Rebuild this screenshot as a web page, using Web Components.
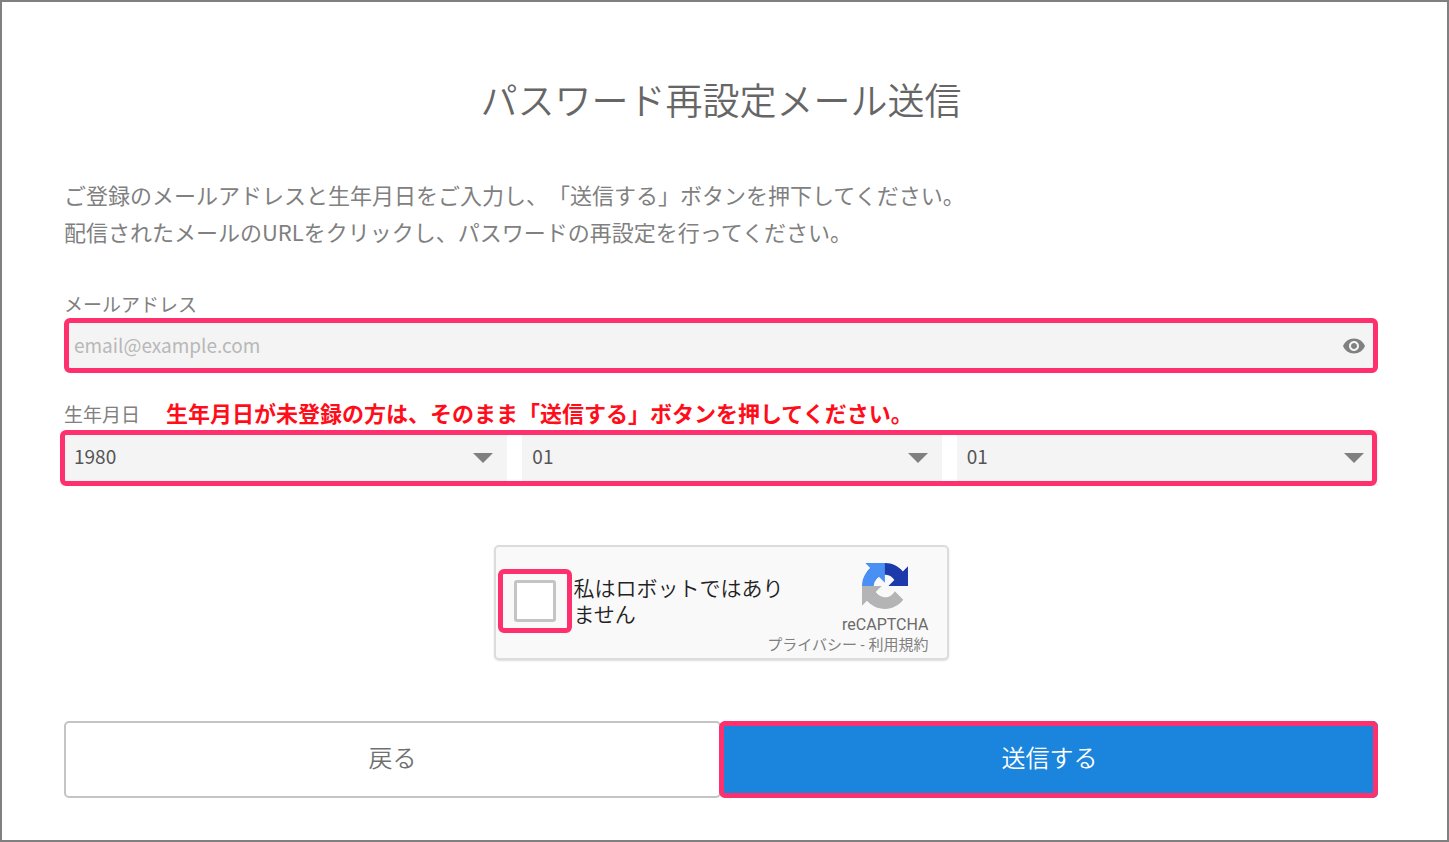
<!DOCTYPE html>
<html lang="ja">
<head>
<meta charset="utf-8">
<title>パスワード再設定メール送信</title>
<style>
  body {
    margin: 0;
    color: #808080;
    background: #fff;
    font-family: "Noto Sans CJK JP", sans-serif;
    font-size: 22px;
    text-spacing-trim: space-all;
  }
  p {
    margin: 0;
  }
</style>
</head>
<body>
<reset-page>
  <span slot="title">パスワード再設定メール送信</span>
  <p slot="lead">ご登録のメールアドレスと生年月日をご入力し、「送信する」ボタンを押下してください。<br>配信されたメールのURLをクリックし、パスワードの再設定を行ってください。</p>
  <email-field label="メールアドレス" placeholder="email@example.com"></email-field>
  <birth-date-field label="生年月日">生年月日が未登録の方は、そのまま「送信する」ボタンを押してください。</birth-date-field>
  <robot-check>私はロボットではありません</robot-check>
  <form-actions>
    <action-button slot="back">戻る</action-button>
    <action-button slot="send" primary>送信する</action-button>
  </form-actions>
</reset-page>

<script>
class ResetPage extends HTMLElement {
  constructor() {
    super();
    this.attachShadow({ mode: 'open' })
    this.shadowRoot.innerHTML = `
      <style>
        :host {
          display: block;
          box-sizing: border-box;
          min-height: 100vh;
          padding: 74px 69px 40px 62px;
          border: 2px solid #808080;
        }
        h1 {
          margin: 0 0 54px;
          color: #666;
          font-size: 37px;
          font-weight: 350;
          line-height: 46px;
          text-align: center;
        }
        .lead {
          margin-bottom: 40px;
          line-height: 37px;
        }
      </style>
      <main>
        <h1><slot name="title"></slot></h1>
        <div class="lead"><slot name="lead"></slot></div>
        <form><slot></slot></form>
      </main>
    `
  }
}

// pink frame laid over whatever is slotted in
class FocusFrame extends HTMLElement {
  constructor() {
    super();
    this.attachShadow({ mode: 'open' })
    this.shadowRoot.innerHTML = `
      <style>
        :host {
          display: block;
          position: relative;
        }
        :host::after {
          content: "";
          position: absolute;
          inset: var(--frame-inset, 0);
          border: 5px solid #ff306e;
          border-radius: 6px;
          pointer-events: none;
        }
      </style>
      <slot></slot>
    `
  }
}

class EmailField extends HTMLElement {
  constructor() {
    super();
    this.attachShadow({ mode: 'open' })
  }

  connectedCallback() {
    this.shadowRoot.innerHTML = `
      <style>
        :host {
          display: block;
          margin-bottom: 27px;
        }
        label {
          display: block;
          font-size: 19px;
          line-height: 28px;
        }
        .box {
          display: flex;
          align-items: center;
          height: 55px;
          padding: 0 12px 0 10px;
          border-radius: 6px;
          background: #f4f4f4;
        }
        input {
          flex: 1;
          min-width: 0;
          padding: 0 0 2px;
          border: 0;
          outline: 0;
          background: none;
          color: #444;
          font: inherit;
          font-size: 19px;
        }
        input::placeholder {
          color: #b8b8b8;
        }
        button {
          display: flex;
          padding: 0;
          border: 0;
          background: none;
        }
      </style>
      <label for="email"></label>
      <focus-frame>
        <div class="box">
          <input id="email" type="email">
          <button type="button" aria-label="表示">
            <svg width="24" height="24" viewBox="0 0 24 24" fill="#808080"><path d="M12 4.500C7 4.500 2.730 7.610 1 12c1.730 4.390 6 7.500 11 7.500s9.270-3.110 11-7.500c-1.730-4.390-6-7.500-11-7.500zM12 17c-2.760 0-5-2.240-5-5s2.240-5 5-5 5 2.240 5 5-2.240 5-5 5zm0-8c-1.660 0-3 1.340-3 3s1.340 3 3 3 3-1.340 3-3-1.340-3-3-3z"/></svg>
          </button>
        </div>
      </focus-frame>
    `
    this.shadowRoot.querySelector('label').textContent = this.getAttribute('label')
    this.shadowRoot.querySelector('input').placeholder = this.getAttribute('placeholder')
  }
}

class BirthDateField extends HTMLElement {
  constructor() {
    super();
    this.attachShadow({ mode: 'open' })
  }

  connectedCallback() {
    this.shadowRoot.innerHTML = `
      <style>
        :host {
          display: block;
          margin-bottom: 59px;
        }
        .head {
          display: flex;
          align-items: flex-start;
          gap: 26px;
          min-height: 30px;
        }
        label {
          font-size: 19px;
          line-height: 28px;
        }
        strong {
          color: #ff0d1a;
          font-weight: 700;
          line-height: 24px;
        }
        focus-frame {
          --frame-inset: 0 1px 0 -4px;
        }
        .row {
          display: grid;
          grid-template-columns: 443fr 419fr 421fr;
          gap: 15px;
        }
        .pick {
          display: grid;
          align-items: center;
          background: #f4f4f4;
        }
        select, svg {
          grid-area: 1 / 1;
        }
        select {
          appearance: none;
          width: 100%;
          height: 56px;
          padding: 0 44px 6px 10px;
          border: 0;
          border-radius: 0;
          outline: 0;
          background: none;
          color: #555;
          font: inherit;
          font-size: 19px;
        }
        svg {
          justify-self: end;
          margin-right: 14px;
          pointer-events: none;
        }
      </style>
      <div class="head"><label for="year"></label><strong><slot></slot></strong></div>
      <focus-frame>
        <div class="row">
          ${this._pick('year', '年', '1980')}
          ${this._pick('month', '月', '01')}
          ${this._pick('day', '日', '01')}
        </div>
      </focus-frame>
    `
    this.shadowRoot.querySelector('label').textContent = this.getAttribute('label')
  }

  _pick(id, name, value) {
    return `
      <div class="pick">
        <select id="${id}" aria-label="${name}"><option>${value}</option></select>
        <svg width="20" height="10" viewBox="0 0 20 10"><path d="M0 0h20L10 10z" fill="#808080"/></svg>
      </div>`
  }
}

class RobotCheck extends HTMLElement {
  constructor() {
    super();
    this.attachShadow({ mode: 'open' })
    this.shadowRoot.innerHTML = `
      <style>
        :host {
          display: flex;
          box-sizing: border-box;
          align-items: center;
          justify-content: space-between;
          width: 455px;
          max-width: 100%;
          height: 115px;
          margin: 0 auto 61px;
          padding: 0 18px 0 2px;
          border: 2px solid #dcdcdc;
          border-radius: 5px;
          background: #f9f9f9;
          box-shadow: 0 1px 2px #0002;
          font-family: Roboto, "Noto Sans CJK JP", sans-serif;
        }
        .check {
          display: flex;
          align-items: center;
          gap: 2px;
          padding-bottom: 4px;
        }
        .tick {
          display: grid;
          place-items: center;
          width: 74px;
          height: 64px;
        }
        input {
          appearance: none;
          width: 42px;
          height: 42px;
          margin: 0;
          border: 3px solid #c4c4c4;
          border-radius: 3px;
          background: #fff;
        }
        label {
          width: 10em;
          padding-top: 2px;
          color: #222;
          font-size: 21px;
          font-weight: 350;
          line-height: 26px;
        }
        .brand {
          display: flex;
          flex-direction: column;
          align-items: flex-end;
          width: 0;
          padding-top: 12px;
          font-size: 15px;
          line-height: 20px;
          white-space: nowrap;
        }
        .logo {
          display: grid;
          justify-items: center;
          gap: 6px;
          color: #6a6a6a;
          font-size: 16px;
        }
        a {
          color: inherit;
          text-decoration: none;
        }
      </style>
      <div class="check">
        <focus-frame><div class="tick"><input type="checkbox" id="robot"></div></focus-frame>
        <label for="robot"><slot></slot></label>
      </div>
      <div class="brand">
        <div class="logo">
          <svg width="46" height="46" viewBox="0 0 64 64">
            <path fill="#1c3aa9" d="M64 31.955l-.033-1.370V4.687l-7.160 7.160C50.948 4.674 42.033.093 32.050.093c-10.400 0-19.622 4.960-25.458 12.640l11.736 11.860a15.550 15.550 0 0 1 4.754-5.334c2.050-1.600 4.952-2.906 8.968-2.906.485 0 .86.057 1.135.163 4.976.393 9.288 3.140 11.828 7.124l-8.307 8.307z"/>
            <path fill="#4a90f4" d="M31.862.094l-1.370.033H4.594l7.160 7.160C4.580 13.147 0 22.060 0 32.046c0 10.400 4.960 19.622 12.640 25.458L24.500 45.768a15.550 15.550 0 0 1-5.334-4.754c-1.600-2.050-2.906-4.952-2.906-8.968 0-.485.057-.86.163-1.135.393-4.976 3.140-9.288 7.124-11.828l8.307 8.307z"/>
            <path fill="#b4b4b4" d="M.001 32.045l.033 1.370v25.898l7.160-7.160c5.860 7.173 14.774 11.754 24.760 11.754 10.400 0 19.622-4.960 25.458-12.640l-11.736-11.860a15.550 15.550 0 0 1-4.754 5.334c-2.050 1.600-4.952 2.906-8.968 2.906-.485 0-.86-.057-1.135-.163-4.976-.393-9.288-3.140-11.828-7.124l8.307-8.307z"/>
          </svg>
          <span>reCAPTCHA</span>
        </div>
        <div><a href="#privacy">プライバシー</a> - <a href="#terms">利用規約</a></div>
      </div>
    `
  }
}

class FormActions extends HTMLElement {
  constructor() {
    super();
    this.attachShadow({ mode: 'open' })
    this.shadowRoot.innerHTML = `
      <style>
        :host {
          display: grid;
          grid-template-columns: 1fr 1fr;
        }
        focus-frame {
          --frame-inset: 0 0 0 -2px;
        }
      </style>
      <slot name="back"></slot>
      <focus-frame><slot name="send"></slot></focus-frame>
    `
  }
}

class ActionButton extends HTMLElement {
  constructor() {
    super();
    this.attachShadow({ mode: 'open' })
    this.shadowRoot.innerHTML = `
      <style>
        :host {
          display: block;
        }
        button {
          display: block;
          width: 100%;
          height: 77px;
          padding: 0 0 6px;
          border: 2px solid #c4c4c4;
          border-radius: 5px;
          background: #fff;
          color: #707070;
          font: inherit;
          font-size: 24px;
          font-weight: 350;
        }
        :host([primary]) button {
          border-color: #1b84dc;
          background: #1b84dc;
          color: #fff;
        }
      </style>
      <button type="button"><slot></slot></button>
    `
  }
}

customElements.define('focus-frame', FocusFrame)
customElements.define('reset-page', ResetPage)
customElements.define('email-field', EmailField)
customElements.define('birth-date-field', BirthDateField)
customElements.define('robot-check', RobotCheck)
customElements.define('form-actions', FormActions)
customElements.define('action-button', ActionButton)
</script>
</body>
</html>
